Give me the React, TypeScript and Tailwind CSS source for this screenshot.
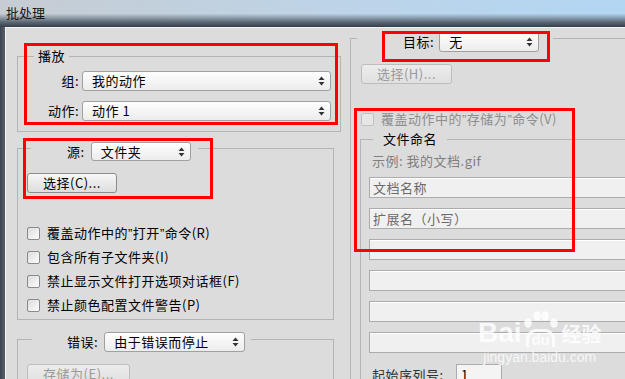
import React from "react";

function Arrows() {
  return (
    <svg width="7" height="10" viewBox="0 0 7 10" className="shrink-0">
      <path d="M3.5 0.5 L6.5 4 L0.5 4 Z" fill="#333" />
      <path d="M3.5 9.5 L6.5 6 L0.5 6 Z" fill="#333" />
    </svg>
  );
}

function Select({ value, className = "" }: { value: string; className?: string }) {
  return (
    <div
      className={`flex items-center justify-between rounded-[3px] border border-[#a0a0a0] bg-[linear-gradient(#fefefe,#ececec)] pl-[9px] pr-[5px] leading-[18px] text-black ${className}`}
    >
      <span>{value}</span>
      <Arrows />
    </div>
  );
}

function Button({ label, disabled, className = "" }: { label: string; disabled?: boolean; className?: string }) {
  return (
    <div
      className={`flex h-[20px] items-center justify-center rounded-[3px] border leading-[18px] ${
        disabled
          ? "border-[#bdbdbd] bg-[linear-gradient(#ececec,#e0e0e0)] text-[#9a9a9a]"
          : "border-[#8c8c8c] bg-[linear-gradient(#f7f7f7,#dddddd)] text-black"
      } ${className}`}
    >
      {label}
    </div>
  );
}

// narrow latin quote mark, as in the original dialog
const Q = () => <span className="font-['Liberation_Sans',sans-serif]">{"\u201d"}</span>;

function Checkbox({ label, disabled }: { label: React.ReactNode; disabled?: boolean }) {
  return (
    <div className="flex h-[24px] items-center gap-[7px] pl-[9px]">
      <div
        className={`h-[13px] w-[13px] shrink-0 rounded-[2px] border ${
          disabled
            ? "border-[#c2c2c2] bg-[#e6e6e6]"
            : "border-[#8a8a8a] bg-[linear-gradient(135deg,#dcdcdc,#fdfdfd)]"
        }`}
      />
      <span className={`leading-[18px] ${disabled ? "text-[#8e8e8e]" : "text-black"}`}>{label}</span>
    </div>
  );
}

function Field({ text }: { text?: string }) {
  return (
    <div className="flex h-[21px] w-[280px] items-center border border-[#acacac] bg-[#f0f0f0] pl-[3px] leading-[18px] text-[#6a6a6a] shadow-[inset_0_1px_0_#fff]">
      {text}
    </div>
  );
}

export default function App() {
  return (
    <div className="relative h-[379px] w-[625px] overflow-hidden bg-[#dcdcdc] text-[13px] font-['Noto_Sans_CJK_SC','Microsoft_YaHei',sans-serif]">
      {/* Title bar */}
      <div className="flex h-[27px] items-start bg-[linear-gradient(to_bottom,rgba(0,0,0,0)_50%,#5b6773_82%,#353f4a),linear-gradient(to_right,#c6ccd2,#bdd4e8_55%,#b3d6f3)] pl-[6px] pt-[4px]">
        <span className="leading-[17px] text-[#141414]">批处理</span>
      </div>

      <div className="flex h-[352px] tracking-[0.5px]">
        <div className="w-[5px] shrink-0 bg-[linear-gradient(to_right,#3a4450,#56616c)]" />

        <div className="flex flex-1 border-l border-t border-[#f3f3f3]">
          {/* Left column */}
          <div className="w-[335px] shrink-0 pl-[11px]">
            <fieldset className="mt-[19px] w-[324px] border border-[#b4b4b4] pb-[10px]">
              <legend className="ml-[16px] px-[4px] leading-[18px]">播放</legend>
              <div className="mt-[6px] flex flex-col gap-[10px]">
                <div className="flex items-center">
                  <span className="w-[61px] text-right leading-[18px]">组:</span>
                  <Select value="我的动作" className="ml-[3px] h-[20px] w-[249px]" />
                </div>
                <div className="flex items-center">
                  <span className="w-[61px] text-right leading-[18px]">动作:</span>
                  <Select value="动作 1" className="ml-[3px] h-[20px] w-[249px]" />
                </div>
              </div>
            </fieldset>

            <fieldset className="mt-[10px] w-[317px] border border-[#b4b4b4] pb-[2px]">
              <legend className="ml-[13px] flex h-[12px] items-start gap-[6px] pl-[36px] pr-[7px]">
                <span className="leading-[19px]">源:</span>
                <Select value="文件夹" className="h-[19px] w-[100px]" />
              </legend>
              <Button label="选择(C)..." className="ml-[9px] mt-[19px] w-[90px]" />
              <div className="mt-[28px] flex flex-col">
                <Checkbox label={<>覆盖动作中的<Q />打开<Q />命令(R)</>} />
                <Checkbox label="包含所有子文件夹(I)" />
                <Checkbox label="禁止显示文件打开选项对话框(F)" />
                <Checkbox label="禁止颜色配置文件警告(P)" />
              </div>
            </fieldset>

            <fieldset className="mt-[12px] h-[60px] w-[317px] border border-[#b4b4b4]">
              <legend className="ml-[14px] flex h-[14px] items-start gap-[6px] pl-[35px] pr-[6px]">
                <span className="leading-[20px]">错误:</span>
                <Select value="由于错误而停止" className="h-[20px] w-[141px]" />
              </legend>
              <Button label="存储为(E)..." disabled className="ml-[9px] mt-[18px] w-[103px]" />
            </fieldset>
          </div>

          {/* Right column */}
          <div className="flex-1 pl-[9px]">
            <fieldset className="mt-[4px] h-[360px] w-[320px] border border-[#b4b4b4]">
              <legend className="ml-[6px] flex h-[12px] items-start gap-[5px] pl-[46px] pr-[14px]">
                <span className="leading-[20px]">目标:</span>
                <Select value="无" className="h-[20px] w-[100px]" />
              </legend>
              <Button label="选择(H)..." disabled className="ml-[10px] mt-[20px] w-[91px]" />
              <div className="mt-[24px] flex h-[22px] items-center gap-[7px] pl-[10px]">
                <div className="h-[13px] w-[13px] rounded-[2px] border border-[#c2c2c2] bg-[#e6e6e6]" />
                <span className="leading-[18px] text-[#8e8e8e]">覆盖动作中的<Q />存储为<Q />命令(V)</span>
              </div>

              <fieldset className="ml-[9px] h-[260px] w-[300px] border border-[#b4b4b4]">
                <legend className="ml-[12px] px-[10px] leading-[18px]">文件命名</legend>
                <div className="ml-[11px] mt-[5px] leading-[16px] text-[#7f7f7f]">示例: 我的文档.gif</div>
                <div className="ml-[8px] mt-[8px] flex flex-col gap-[10px]">
                  <Field text="文档名称" />
                  <Field text="扩展名（小写）" />
                  <Field />
                  <Field />
                  <Field />
                  <Field />
                </div>
                <div className="ml-[11px] mt-[11px] flex items-center">
                  <span className="w-[84px] leading-[18px] text-[#303030]">起始序列号:</span>
                  <div className="flex h-[21px] w-[46px] items-center border border-[#acacac] bg-[#f4f4f4] pl-[4px] leading-[18px]">
                    1
                  </div>
                </div>
              </fieldset>
            </fieldset>
          </div>
        </div>
      </div>

      {/* Watermark */}
      <div className="pointer-events-none absolute left-[478px] top-[309px] flex flex-col items-center text-white opacity-80">
        <div className="flex items-end">
          <span className="font-['Liberation_Sans',sans-serif] text-[28px] font-bold leading-[28px]">Bai</span>
          <div className="relative flex h-[38px] w-[38px] flex-col items-center justify-end">
            <svg width="36" height="17" viewBox="0 0 36 17" className="mb-[1px]">
              <ellipse cx="5" cy="12" rx="3.8" ry="4.8" fill="white" />
              <ellipse cx="14" cy="5" rx="3.8" ry="4.8" fill="white" />
              <ellipse cx="22" cy="5" rx="3.8" ry="4.8" fill="white" />
              <ellipse cx="31" cy="12" rx="3.8" ry="4.8" fill="white" />
            </svg>
            <span className="rounded-t-[10px] border-[3px] border-b-0 border-white px-[2px] font-['Liberation_Sans',sans-serif] text-[15px] font-bold leading-[15px]">du</span>
          </div>
          <span className="ml-[2px] text-[20px] font-bold leading-[26px]">经验</span>
        </div>
        <span className="mt-[2px] font-['Liberation_Sans',sans-serif] text-[14px] leading-[16px]">jingyan.baidu.com</span>
      </div>

      {/* Red annotation boxes */}
      <div className="pointer-events-none absolute left-[24px] top-[43px] h-[82px] w-[314px] border-[3px] border-[#ff0000]" />
      <div className="pointer-events-none absolute left-[23px] top-[138px] h-[61px] w-[190px] border-[3px] border-[#ff0000]" />
      <div className="pointer-events-none absolute left-[382px] top-[31px] h-[31px] w-[168px] border-[3px] border-[#ff0000]" />
      <div className="pointer-events-none absolute left-[354px] top-[108px] h-[144px] w-[221px] border-[3px] border-[#ff0000]" />
    </div>
  );
}
